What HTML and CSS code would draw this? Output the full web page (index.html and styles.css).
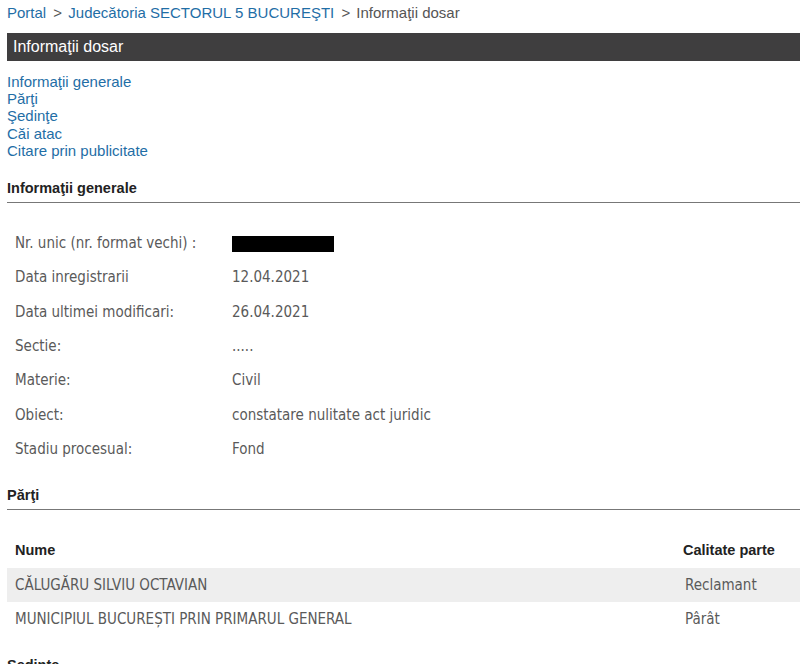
FILE: index.html
```html
<!DOCTYPE html>
<html lang="ro">
<head>
    <meta charset="UTF-8">
    <title>Informaţii dosar</title>
    <link rel="stylesheet" href="styles.css">
</head>
<body>

    <div class="breadcrumb">
        <a href="#">Portal</a>
        <span class="sep">&gt;</span>
        <a href="#">Judecătoria SECTORUL 5 BUCUREŞTI</a>
        <span class="sep">&gt;</span>
        <span class="current">Informaţii dosar</span>
    </div>

    <div class="title-bar">Informaţii dosar</div>

    <ul class="menu">
        <li><a href="#generale">Informaţii generale</a></li>
        <li><a href="#parti">Părţi</a></li>
        <li><a href="#sedinte">Şedinţe</a></li>
        <li><a href="#cai">Căi atac</a></li>
        <li><a href="#citare">Citare prin publicitate</a></li>
    </ul>

    <h3 class="section" id="generale">Informaţii generale</h3>
    <table class="info">
        <tr><td class="label">Nr. unic (nr. format vechi) :</td><td><span class="redacted"></span></td></tr>
        <tr><td class="label">Data inregistrarii</td><td>12.04.2021</td></tr>
        <tr><td class="label">Data ultimei modificari:</td><td>26.04.2021</td></tr>
        <tr><td class="label">Sectie:</td><td>.....</td></tr>
        <tr><td class="label">Materie:</td><td>Civil</td></tr>
        <tr><td class="label">Obiect:</td><td>constatare nulitate act juridic</td></tr>
        <tr><td class="label">Stadiu procesual:</td><td>Fond</td></tr>
    </table>

    <h3 class="section" id="parti">Părţi</h3>
    <table class="parti">
        <tr><th>Nume</th><th class="calitate">Calitate parte</th></tr>
        <tr class="odd"><td>CĂLUGĂRU SILVIU OCTAVIAN</td><td>Reclamant</td></tr>
        <tr><td>MUNICIPIUL BUCUREȘTI PRIN PRIMARUL GENERAL</td><td>Pârât</td></tr>
    </table>

    <h3 class="section" id="sedinte">Şedinţe</h3>

</body>
</html>
```

FILE: styles.css
```css
body {
    margin: 0;
    padding: 0 0 0 7px;
    font-family: "Liberation Sans", Arial, sans-serif;
    color: #333;
    background: #fff;
    overflow: hidden;
}
a {
    color: #1f6ea6;
    text-decoration: none;
}
.breadcrumb {
    font-size: 15px;
    line-height: 18px;
    padding-top: 4px;
    color: #555;
}
.breadcrumb .sep {
    margin: 0 2px 0 3px;
}
.title-bar {
    margin-top: 11px;
    height: 28px;
    line-height: 28px;
    background-color: #3f3e3f;
    color: #fff;
    font-size: 16px;
    padding-left: 6px;
}
.menu {
    list-style: none;
    margin: 12px 0 0 0;
    padding: 0;
    font-size: 15px;
    line-height: 17.2px;
}
.section {
    margin: 21px 0 0 0;
    padding-bottom: 5px;
    font-size: 14.5px;
    line-height: 17px;
    font-weight: bold;
    color: #222;
    border-bottom: 1px solid #777;
}
.info {
    border-collapse: collapse;
    margin-top: 23px;
    font-family: "DejaVu Sans Condensed", "DejaVu Sans", sans-serif;
    font-size: 15px;
    color: #5a5a5a;
}
.info td {
    height: 34.3px;
    padding: 0 0 0 8px;
    vertical-align: middle;
}
.info td.label {
    width: 209px;
}
.redacted {
    display: inline-block;
    width: 102px;
    height: 16px;
    background: #000;
    vertical-align: middle;
}
.parti {
    width: 100%;
    border-collapse: collapse;
    margin-top: 22px;
    font-family: "DejaVu Sans Condensed", "DejaVu Sans", sans-serif;
    font-size: 15px;
    color: #5a5a5a;
}
.parti th {
    text-align: left;
    font-family: "Liberation Sans", Arial, sans-serif;
    font-size: 14.5px;
    color: #222;
    height: 36px;
    padding: 0 0 0 8px;
}
.parti th.calitate {
    width: 117px;
    padding-left: 6px;
}
.parti td {
    height: 34px;
    padding: 0 0 0 8px;
}
.parti tr.odd td {
    background-color: #eee;
}
```
